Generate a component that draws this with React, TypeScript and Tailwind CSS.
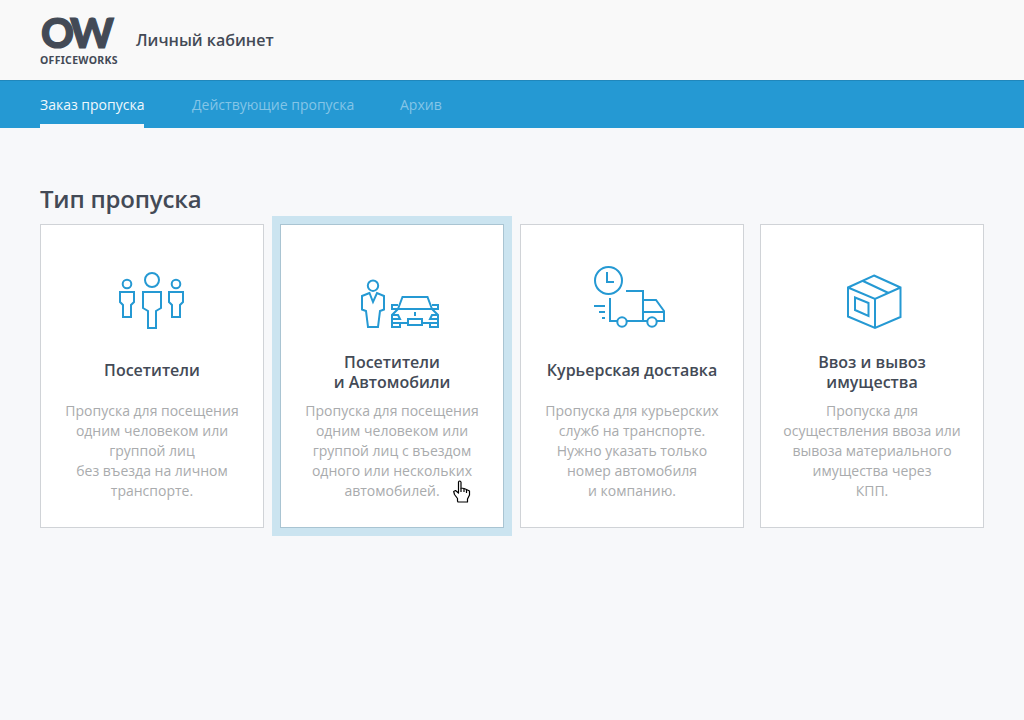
import type { ReactNode } from 'react';

type Pass = { title: string[]; text: string[]; icon: ReactNode; active?: boolean };

const Visitors = () => (
  <g transform="translate(8 2)">
    <circle cx="17" cy="24" r="4.3" />
    <path d="M10 32H24V42L21 45V57H13V45L10 42Z" />
    <circle cx="42" cy="20" r="7" />
    <path d="M33 32H51V48L46 51V68H38V51L33 48Z" />
    <circle cx="66" cy="24" r="4.3" />
    <path d="M59 32H73V42L70 45V57H62V45L59 42Z" />
  </g>
);

const VisitorCar = () => (
  <g transform="translate(8 12)">
    <circle cx="23" cy="15.7" r="5.2" />
    <path d="M19.5 23L12 26V39.5L16 41L18 57H28L30 41L34 39.5V26L27 23L23 32Z" />
    <path d="M48 39L52.500 27H77.500L82 39" />
    <path d="M48 35H42V39H88V35H82M48 39L42 45V53H58M82 39L88 45V53H72" />
    <path d="M43 45H48L50 49H42M87 45H82L80 49H88" />
    <path d="M58 49H72V55H58ZM42 53V57H50V53M88 53V57H80V53M65 42V46" />
  </g>
);

const Truck = () => (
  <g transform="translate(3 0)">
    <circle cx="23.500" cy="22.500" r="13.500" />
    <path d="M22 14V24H29" />
    <path d="M41 33H58V63M25 40V63H32M42 63H62M72 63H79V53L71 42H58M58 54H79" />
    <circle cx="37" cy="64" r="4.700" />
    <circle cx="67" cy="64" r="4.700" />
    <path d="M9 48H20M14 54H20M17 60H20" />
  </g>
);

const Box = () => (
  <g transform="translate(13 7)">
    <path d="M39 10.500L65.500 22.500V52L40 63L13 51.500V22.500ZM13 22.500L40 34L65.500 22.500M40 34V63M28 16L53.500 28" />
    <path d="M20 32.500L33.500 38V51L20 45Z" />
  </g>
);

const passes: Pass[] = [
  {
    title: ['Посетители'],
    text: ['Пропуска для посещения', 'одним человеком или', 'группой лиц', 'без въезда на личном', 'транспорте.'],
    icon: <Visitors />,
  },
  {
    title: ['Посетители', 'и Автомобили'],
    text: ['Пропуска для посещения', 'одним человеком или', 'группой лиц с въездом', 'одного или нескольких', 'автомобилей.'],
    icon: <VisitorCar />,
    active: true,
  },
  {
    title: ['Курьерская доставка'],
    text: ['Пропуска для курьерских', 'служб на транспорте.', 'Нужно указать только', 'номер автомобиля', 'и компанию.'],
    icon: <Truck />,
  },
  {
    title: ['Ввоз и вывоз', 'имущества'],
    text: ['Пропуска для', 'осуществления ввоза или', 'вывоза материального', 'имущества через', 'КПП.'],
    icon: <Box />,
  },
];

function Logo() {
  return (
    <svg className="h-20 w-20 shrink-0" viewBox="0 0 80 80" fill="#434a56">
      <g fontFamily="Lato, sans-serif" fontWeight="900" fontSize="41" stroke="#434a56" strokeWidth="1.2">
        <text x="1" y="48" textLength="33" lengthAdjust="spacingAndGlyphs">O</text>
        <text x="30" y="48" textLength="44" lengthAdjust="spacingAndGlyphs">W</text>
      </g>
      <text x="0" y="64" fontFamily="'Noto Sans', sans-serif" fontWeight="700" fontSize="10.500" textLength="77.500" lengthAdjust="spacing">
        OFFICEWORKS
      </text>
    </svg>
  );
}

function Card({ title, text, icon, active }: Pass) {
  return (
    <button
      className={
        'relative flex h-[304px] w-56 flex-col items-center border bg-white pt-[33px] text-center ' +
        (active ? 'border-[#a9c4d2] ring-8 ring-[#cbe4f0]' : 'border-[#d0d3d7]')
      }
    >
      <svg className="h-20 w-[100px] shrink-0" viewBox="0 0 100 80" fill="none" stroke="#2599d3" strokeWidth="2">
        {icon}
      </svg>
      <span
        className={
          'mt-[11px] flex h-[46px] flex-col justify-center text-[16px] leading-5 font-semibold text-[#434a56] ' +
          (title.length === 1 ? 'pb-1' : '')
        }
      >
        {title.map((line) => (
          <span key={line}>{line}</span>
        ))}
      </span>
      <span className="mt-1.5 flex flex-col text-[14px] leading-5 font-normal whitespace-nowrap text-[#a9abad]">
        {text.map((line) => (
          <span key={line}>{line}</span>
        ))}
      </span>
      {active && (
        <svg className="absolute top-[255px] left-[172px] h-6 w-[18px]" viewBox="0 0 18 24" fill="#fff" stroke="#000" strokeWidth="1.200" strokeLinejoin="round">
          <path d="M4.500 21V18.500L1.500 14.500L.7 11.500L2.500 10.500L5.500 13V2Q6.500 0 8 2V8L11 8.500L13.500 9.500L16.500 11V15L14.500 19V22H5Z" />
          <path d="M8 8V12M11 9V12M13.500 10V13" />
        </svg>
      )}
    </button>
  );
}

export default function App() {
  return (
    <div className="min-h-[720px] w-[1024px] bg-[#f7f8fa] font-['Open_Sans','Noto_Sans',sans-serif]">
      <header className="flex h-20 items-center bg-[#f9f9f9] px-10">
        <Logo />
        <span className="ml-4 text-[16px] font-semibold text-[#434a56]">Личный кабинет</span>
      </header>
      <nav className="flex h-12 border-t border-[#2087bb] bg-[#2599d3] px-10 text-[14px] font-normal text-[#84c5e7]">
        <a className="mr-12 flex h-[47px] w-[104px] items-center border-b-4 border-[#f7f8fa] pt-1 whitespace-nowrap text-[#f0f8fc]">Заказ пропуска</a>
        <a className="mr-[46px] flex w-[162px] items-center whitespace-nowrap">Действующие пропуска</a>
        <a className="flex items-center">Архив</a>
      </nav>
      <main className="px-10 pt-[54px]">
        <h1 className="h-[42px] text-[24px] leading-[34px] font-semibold tracking-[-0.2px] text-[#434a56]">Тип пропуска</h1>
        <div className="flex gap-4">
          {passes.map((pass) => (
            <Card key={pass.title.join(' ')} {...pass} />
          ))}
        </div>
      </main>
    </div>
  );
}
